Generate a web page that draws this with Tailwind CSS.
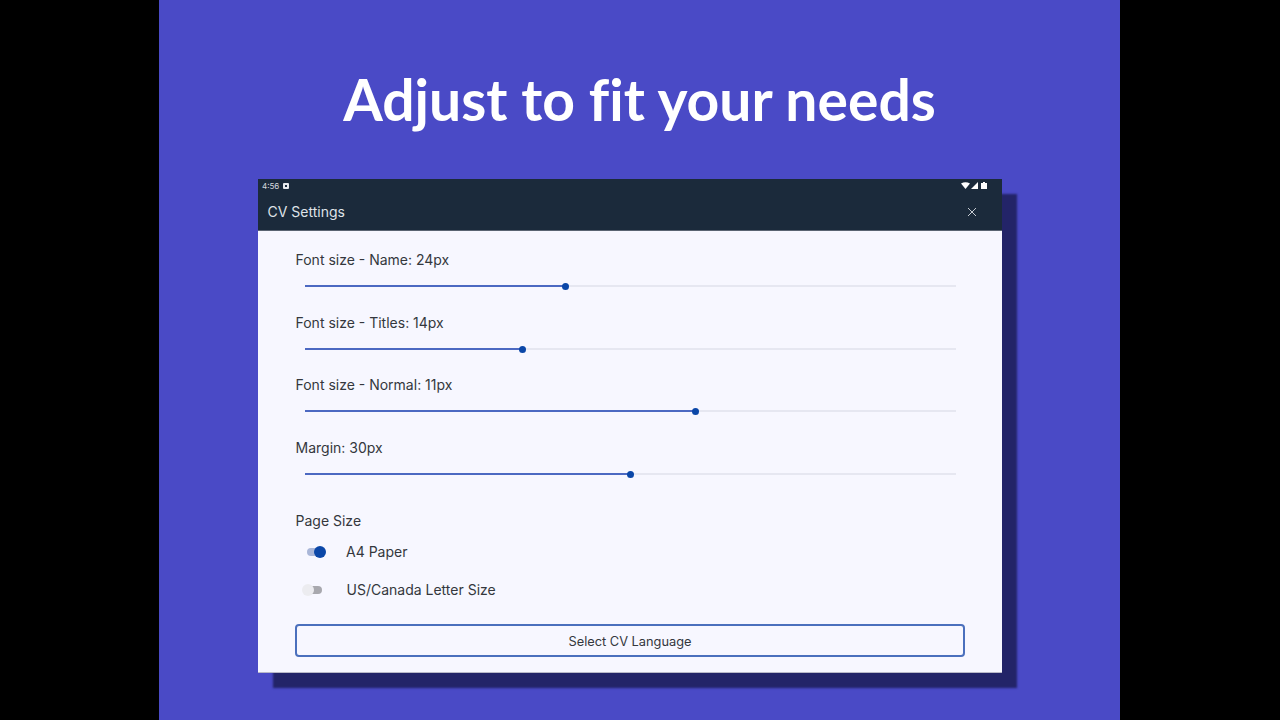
<!DOCTYPE html>
<html lang="en">
<head>
    <meta charset="UTF-8">
    <meta name="viewport" content="width=device-width, initial-scale=1.0">
    <title>Adjust to fit your needs</title>
    <script src="https://cdn.jsdelivr.net/npm/@tailwindcss/browser@4"></script>
</head>
<body class="bg-black h-screen overflow-hidden font-['Inter',sans-serif]">
    <div class="ml-[159px] w-[961px] h-[720px] bg-[#4a4ac6] pt-[65px] pl-[99px]">
        <h1 class="w-[763px] text-center font-['Lato',sans-serif] font-bold text-[57px] leading-[68px] text-white [font-variant-ligatures:none]">Adjust to fit your needs</h1>

        <div class="mt-[46px] w-[744px] h-[494px] flex flex-col shadow-[15px_15px_2px_0_#232468] bg-[#f7f7ff] border-b border-[#b9b9c8]">
            <div class="h-[52px] bg-[#1b2a3b] border-b border-[#5a6472] flex flex-col shrink-0">
                <div class="h-[13px] flex items-center justify-between pl-[4px] pr-[15px]">
                    <div class="flex items-center gap-[4px]">
                        <span class="text-[8px] leading-none text-[#d5d9df]">4:56</span>
                        <span class="w-[6px] h-[6px] bg-[#e8eaee] rounded-[1px] flex items-center justify-center"><span class="w-[2px] h-[2px] bg-[#1b2a3b]"></span></span>
                    </div>
                    <div class="flex items-center">
                        <svg width="9" height="7" viewBox="0 0 9 7"><path d="M0 1.5 Q4.5 -1 9 1.5 L4.5 7 Z" fill="#fff"/></svg>
                        <svg class="ml-[1px]" width="7" height="7" viewBox="0 0 7 7"><path d="M7 0 V7 H0 Z" fill="#fff"/></svg>
                        <svg class="ml-[3px]" width="6" height="7" viewBox="0 0 6 7"><path d="M0 1 H2 V0 H4 V1 H6 V7 H0 Z" fill="#fff"/></svg>
                    </div>
                </div>
                <div class="flex-1 flex items-center justify-between pl-[9.5px] pr-[25px]">
                    <span class="text-[14px] text-[#dfe3e8]">CV Settings</span>
                    <svg class="mt-[2px]" width="10" height="10" viewBox="0 0 10 10" fill="none" stroke="#c5cad1" stroke-width="1"><path d="M1 1 L9 9 M9 1 L1 9"/></svg>
                </div>
            </div>

            <div class="flex-1 pl-[37.5px] pr-[37px] pt-[20px] text-[14px] leading-[18px] text-[#34373d]">
                <div class="h-[63px]">
                    <p>Font size - Name: 24px</p>
                    <div class="mt-[9px] ml-[9.5px] w-[651px] h-[16px] flex items-center">
                        <div class="w-[260px] h-[2px] bg-[#4c69c2]"></div>
                        <div class="w-[7px] h-[7px] -mx-[3.5px] rounded-full bg-[#0b47a8] relative"></div>
                        <div class="flex-1 h-[2px] bg-[#e6e7f1]"></div>
                    </div>
                </div>
                <div class="h-[62px]">
                    <p>Font size - Titles: 14px</p>
                    <div class="mt-[9px] ml-[9.5px] w-[651px] h-[16px] flex items-center">
                        <div class="w-[217px] h-[2px] bg-[#4c69c2]"></div>
                        <div class="w-[7px] h-[7px] -mx-[3.5px] rounded-full bg-[#0b47a8] relative"></div>
                        <div class="flex-1 h-[2px] bg-[#e6e7f1]"></div>
                    </div>
                </div>
                <div class="h-[63px]">
                    <p>Font size - Normal: 11px</p>
                    <div class="mt-[9px] ml-[9.5px] w-[651px] h-[16px] flex items-center">
                        <div class="w-[390px] h-[2px] bg-[#4c69c2]"></div>
                        <div class="w-[7px] h-[7px] -mx-[3.5px] rounded-full bg-[#0b47a8] relative"></div>
                        <div class="flex-1 h-[2px] bg-[#e6e7f1]"></div>
                    </div>
                </div>
                <div class="h-[63px]">
                    <p>Margin: 30px</p>
                    <div class="mt-[9px] ml-[9.5px] w-[651px] h-[16px] flex items-center">
                        <div class="w-[325px] h-[2px] bg-[#4c69c2]"></div>
                        <div class="w-[7px] h-[7px] -mx-[3.5px] rounded-full bg-[#0b47a8] relative"></div>
                        <div class="flex-1 h-[2px] bg-[#e6e7f1]"></div>
                    </div>
                </div>

                <p class="mt-[10px]">Page Size</p>
                <div class="mt-[13px] h-[18px] flex items-center">
                    <div class="relative w-[18px] h-[8px] ml-[11.5px] rounded-full bg-[#a9b6d8]">
                        <div class="absolute right-[-1px] top-[-2px] w-[12px] h-[12px] rounded-full bg-[#0b47a8]"></div>
                    </div>
                    <span class="ml-[21px]">A4 Paper</span>
                </div>
                <div class="mt-[20px] h-[18px] flex items-center">
                    <div class="relative w-[14px] h-[8px] ml-[12.5px] rounded-full bg-[#a8a8ae]">
                        <div class="absolute left-[-6px] top-[-2px] w-[12px] h-[12px] rounded-full bg-[#ececf0]"></div>
                    </div>
                    <span class="ml-[24.5px]">US/Canada Letter Size</span>
                </div>

                <button class="mt-[25px] -ml-[0.5px] pt-[2px] w-[670px] h-[33px] border-2 border-[#4b70bd] rounded-[4px] text-[12.8px] text-[#34373d] flex items-center justify-center">Select CV Language</button>
            </div>
        </div>
    </div>
</body>
</html>
